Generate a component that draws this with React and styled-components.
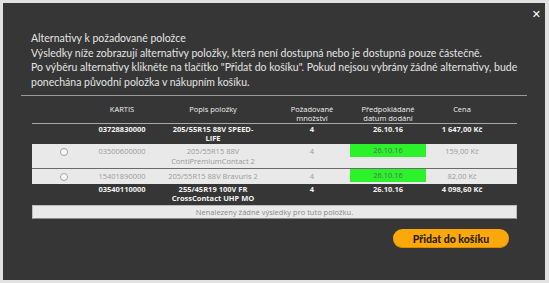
import React from "react";
import styled, { createGlobalStyle } from "styled-components";

const GlobalStyle = createGlobalStyle`
  html, body {
    margin: 0;
    padding: 0;
    background: #e2e2e2;
  }
  body {
    font-family: Lato, "Open Sans", sans-serif;
  }
`;

const Modal = styled.div`
  position: relative;
  box-sizing: border-box;
  margin: 3px 0 0 3px;
  width: 542px;
  height: 277px;
  background: #363636;
  color: #e4e4e4;
  padding-top: 28px;
`;

const Close = styled.button`
  position: absolute;
  top: 6px;
  right: 4px;
  border: 0;
  background: none;
  color: #fff;
  font-family: "DejaVu Sans", sans-serif;
  font-weight: bold;
  font-size: 11px;
  line-height: 12px;
  padding: 0;
  cursor: pointer;
`;

const Intro = styled.div`
  padding: 0 12px 0 28px;
  font-size: 10.5px;
  line-height: 14.5px;

  p {
    margin: 0;
  }
`;

const Divider = styled.hr`
  margin: 6px 18px 0 18px;
  border: 0;
  border-top: 1px solid #9a9a9a;
  height: 0;
`;

const Table = styled.div`
  margin: 0 0 0 29px;
  width: 485px;
  font-family: "Open Sans", sans-serif;
  font-size: 7.5px;
`;

const Row = styled.div`
  display: grid;
  grid-template-columns: 64px 52px 130px 68px 84px 64px 1fr;
  align-items: start;
  text-align: center;
  background: ${(p) => (p.$alt ? "#e9e9e9" : "transparent")};
  color: ${(p) => (p.$alt ? "#9a9a9a" : "#f2f2f2")};
  font-weight: ${(p) => (p.$alt ? 400 : 700)};
  line-height: ${(p) => (p.$alt ? "10px" : "9px")};
  padding: ${(p) => (p.$alt ? "2px 0 2px" : "1px 0 1px")};
  border-bottom: ${(p) => (p.$split ? "1px solid #6a6a6a" : "0")};
`;

const HeadRow = styled(Row)`
  padding: 9px 0 0;
  line-height: 9px;
  font-weight: 400;
  color: #f0f0f0;
  border-bottom: 1px solid #a8a8a8;
`;

const Cell = styled.div`
  padding: 0 ${(p) => p.$pad || 0}px;
  white-space: ${(p) => (p.$wrap ? "normal" : "nowrap")};
`;

const Radio = styled.input.attrs({ type: "radio" })`
  appearance: none;
  display: block;
  margin: 2px auto 0;
  width: 8px;
  height: 8px;
  border: 1px solid #a0a0a0;
  border-radius: 50%;
  background: #fff;
  box-sizing: border-box;
`;

const Date = styled.div`
  margin: -2px 4px 0;
  height: 13px;
  line-height: 13px;
  background: #2cf22c;
  color: #5a6a5a;
`;

const Message = styled.div`
  margin-top: 1px;
  background: #e9e9e9;
  border: 1px solid #bdbdbd;
  border-bottom-color: #8a8a8a;
  color: #8a8a8a;
  text-align: center;
  line-height: 12px;
`;

const Footer = styled.div`
  display: flex;
  justify-content: flex-end;
  padding: 10px 36px 0 0;
`;

const AddButton = styled.button`
  width: 116px;
  height: 19px;
  border: 0;
  border-radius: 10px;
  background: #fca80a;
  box-shadow: inset 0 -1px 0 #d98c00;
  color: #2a1c05;
  font-family: Lato, sans-serif;
  font-weight: 900;
  font-size: 10.5px;
  padding: 0;
  cursor: pointer;
`;

const rows = [
  {
    main: true,
    id: "03728830000",
    desc: "205/55R15 88V SPEED-LIFE",
    qty: "4",
    date: "26.10.16",
    price: "1 647,00 Kč",
  },
  {
    id: "03500600000",
    desc: "205/55R15 88V ContiPremiumContact 2",
    qty: "4",
    date: "26.10.16",
    price: "159,00 Kč",
    split: true,
  },
  {
    id: "15401890000",
    desc: "205/55R15 88V Bravuris 2",
    qty: "4",
    date: "26.10.16",
    price: "82,00 Kč",
  },
  {
    main: true,
    id: "03540110000",
    desc: "255/45R19 100V FR CrossContact UHP MO",
    qty: "4",
    date: "26.10.16",
    price: "4 098,60 Kč",
  },
];

export default function App() {
  return (
    <>
      <GlobalStyle />
      <Modal>
        <Close aria-label="Zavřít">✕</Close>
        <Intro>
          <p>Alternativy k požadované položce</p>
          <p>
            Výsledky níže zobrazují alternativy položky, která není dostupná
            nebo je dostupná pouze částečně.
          </p>
          <p>
            Po výběru alternativy klikněte na tlačítko "Přidat do košíku".
            Pokud nejsou vybrány žádné alternativy, bude ponechána původní
            položka v nákupním košíku.
          </p>
        </Intro>
        <Divider />
        <Table>
          <HeadRow>
            <Cell />
            <Cell>KARTIS</Cell>
            <Cell>Popis položky</Cell>
            <Cell $wrap>
              Požadované
              <br />
              množství
            </Cell>
            <Cell $wrap>
              Předpokládané
              <br />
              datum dodání
            </Cell>
            <Cell>Cena</Cell>
            <Cell />
          </HeadRow>
          {rows.map((r) => (
            <Row key={r.id} $alt={!r.main} $split={r.split}>
              <Cell>{r.main ? null : <Radio name="alt" />}</Cell>
              <Cell>{r.id}</Cell>
              <Cell $wrap $pad={20}>
                {r.desc}
              </Cell>
              <Cell>{r.qty}</Cell>
              <Cell>{r.main ? r.date : <Date>{r.date}</Date>}</Cell>
              <Cell>{r.price}</Cell>
              <Cell />
            </Row>
          ))}
          <Message>Nenalezeny žádné výsledky pro tuto položku.</Message>
        </Table>
        <Footer>
          <AddButton>Přidat do košíku</AddButton>
        </Footer>
      </Modal>
    </>
  );
}
